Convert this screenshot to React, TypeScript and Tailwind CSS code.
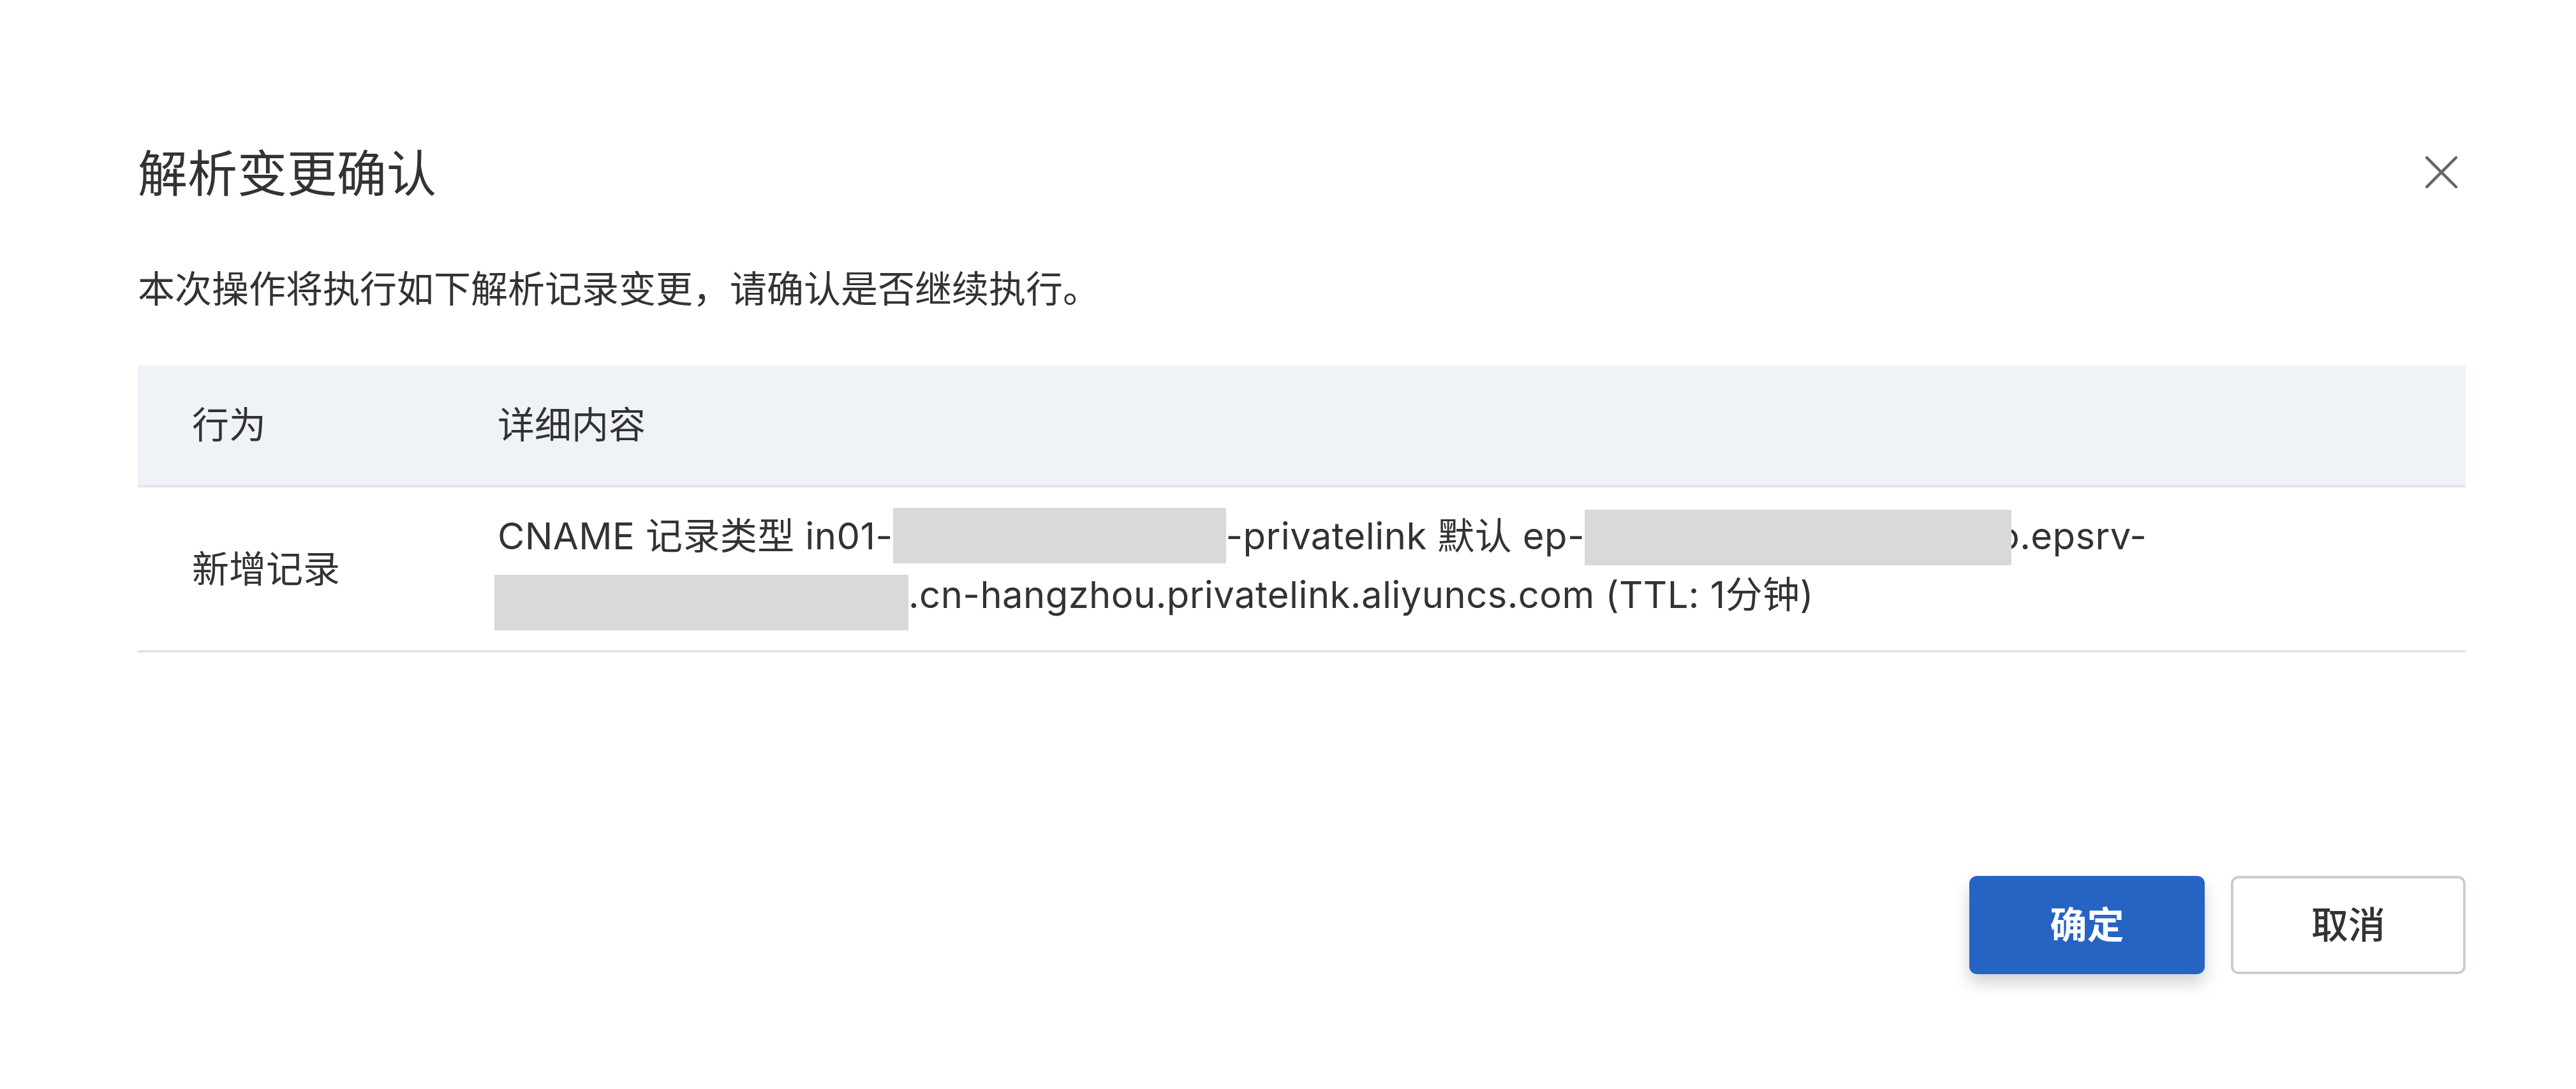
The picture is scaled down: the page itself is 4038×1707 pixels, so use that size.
const font = { fontFamily: 'Inter, "Noto Sans CJK SC", sans-serif' };

const CloseIcon = () => (
  <svg width="50" height="50" viewBox="0 0 50 50" className="shrink-0">
    <path d="M2 2 L48 48 M48 2 L2 48" stroke="#666" strokeWidth="4.5" strokeLinecap="square" />
  </svg>
);

export default function App() {
  return (
    <div
      style={font}
      className="flex h-[1707px] w-full flex-col bg-white pl-[216px] pr-[173px] text-[#333]"
    >
      <div className="mt-[218px] flex h-[110px] items-center justify-between">
        <h1 className="text-[78px] font-normal leading-[110px]">解析变更确认</h1>
        <div className="mr-[13px] -mt-[6px]">
          <CloseIcon />
        </div>
      </div>

      <p className="mt-[85px] text-[58px] leading-[80px]">
        本次操作将执行如下解析记录变更，请确认是否继续执行。
      </p>

      <div className="mt-[80px] text-[58px]">
        <div className="grid h-[191px] grid-cols-[479px_1fr] items-center border-b-4 border-[#e3e5ea] bg-[#eff2f7]">
          <div className="pl-[85px]">行为</div>
          <div className="pl-[85px]">详细内容</div>
        </div>
        <div className="grid grid-cols-[479px_1fr] items-center border-b-4 border-[#e3e5ea]">
          <div className="pl-[85px] leading-[80px]">新增记录</div>
          <div className="pb-[31px] pl-[85px] pt-[30px] leading-[92px] tracking-[0.4px]">
            CNAME 记录类型 in01-
            <span className="inline-block h-[87px] w-[522px] bg-[#d9d9d9] align-[-22px]" />
            -privatelink 默认 ep-
            <span className="relative z-10 -mr-[22px] inline-block h-[87px] w-[669px] bg-[#d9d9d9] align-[-25px]" />
            o.epsrv-
            <br />
            <span className="-ml-[5px] inline-block h-[87px] w-[649px] bg-[#d9d9d9] align-[-35px]" />
            .cn-hangzhou.privatelink.aliyuncs.com (TTL: 1分钟)
          </div>
        </div>
      </div>

      <div className="mt-[350px] flex justify-end gap-[41px]">
        <button className="h-[154px] w-[369px] rounded-[12px] bg-[#2664c4] text-[58px] font-bold text-white shadow-[0_14px_26px_rgba(0,0,0,0.18)]">
          确定
        </button>
        <button className="h-[154px] w-[368px] rounded-[12px] border-4 border-[#c9ccd2] bg-white text-[58px] font-medium text-[#333]">
          取消
        </button>
      </div>
    </div>
  );
}
